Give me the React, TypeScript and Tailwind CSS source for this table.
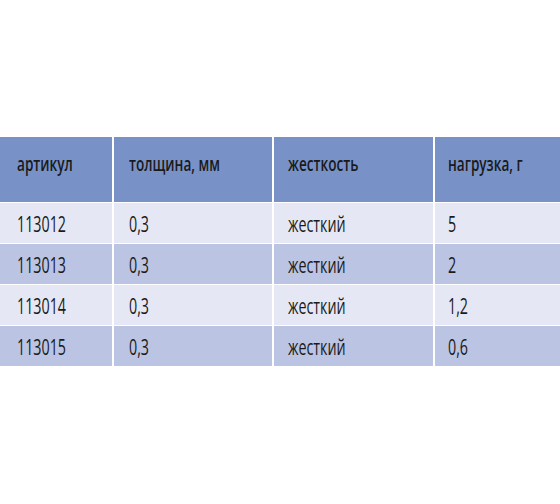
const headers = ['артикул', 'толщина, мм', 'жесткость', 'нагрузка, г'];

const rows = [
  ['113012', '0,3', 'жесткий', '5'],
  ['113013', '0,3', 'жесткий', '2'],
  ['113014', '0,3', 'жесткий', '1,2'],
  ['113015', '0,3', 'жесткий', '0,6'],
];

const pads = ['pl-[17px]', 'pl-[15px]', 'pl-[14px]', 'pl-[13px]'];

function Cell({ text, className }: { text: string; className: string }) {
  return (
    <div className={className}>
      <span className="inline-block origin-left scale-x-[0.68] whitespace-nowrap">{text}</span>
    </div>
  );
}

export default function App() {
  return (
    <div className="h-[504px] w-[560px] bg-white pt-[137px] text-[21px] leading-none text-[#1a1a1a]" style={{ fontFamily: '"Open Sans", "Noto Sans", sans-serif' }}>
      <div className="grid grid-cols-[112px_158px_159px_125px] gap-x-[2px] gap-y-[1px]">
        {headers.map((h, i) => (
          <Cell key={h} text={h} className={`h-[65px] bg-[#7892c8] pt-[17px] font-semibold text-[20px] ${pads[i]}`} />
        ))}
        {rows.map((row, r) =>
          row.map((v, i) => (
            <Cell
              key={`${r}-${i}`}
              text={v}
              className={`h-[40px] pt-[11px] font-medium ${pads[i]} ${r % 2 === 0 ? 'bg-[#e5e8f4]' : 'bg-[#bbc4e3]'}`}
            />
          )),
        )}
      </div>
    </div>
  );
}
